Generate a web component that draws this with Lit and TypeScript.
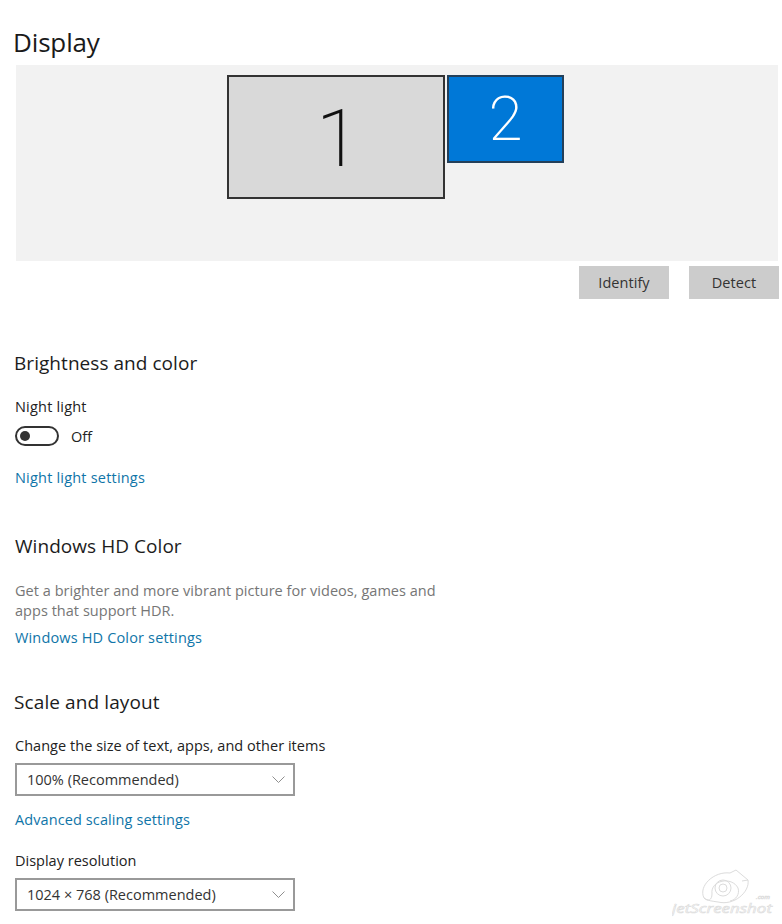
import { LitElement, html, css } from "lit";
import { customElement } from "lit/decorators.js";

const chevron = html`<svg class="chev" width="13" height="7" viewBox="0 0 13 7" fill="none" stroke="#8f8f8f" stroke-width="1"><path d="M0.5 0.5 L6.5 6.5 L12.5 0.5"/></svg>`;

@customElement("app-root")
export class AppRoot extends LitElement {
  static styles = css`
    :host {
      display: block;
      width: 782px;
      height: 924px;
      overflow: hidden;
      position: relative;
      background: #fff;
      font-family: "Open Sans", "Noto Sans", sans-serif;
      font-size: 14.5px;
      color: #222;
    }
    .page { display: flex; flex-direction: column; align-items: flex-start; padding-left: 15px; }
    h1 { font-size: 26px; font-weight: 400; line-height: 36px; margin: 24px 0 5px -2px; color: #1a1a1a; letter-spacing: -0.15px; }
    .preview {
      width: 762px; height: 196px; margin-left: 1px; background: #f2f2f2; box-sizing: border-box;
      display: flex; align-items: flex-start; gap: 2px; padding: 10px 0 0 211px;
    }
    .mon { box-sizing: border-box; display: flex; justify-content: center; align-items: center; border: 2px solid #333; }
    .mon1 { width: 218px; height: 124px; background: #d9d9d9; color: #111; font-size: 80px; padding: 4px 0 0 4px; }
    .mon2 { width: 117px; height: 88px; background: #0078d7; color: #fff; font-size: 62px; border-color: #24405a; }
    .digit { font-family: Roboto, "Open Sans", sans-serif; font-weight: 200; line-height: 1; }
    .buttons { display: flex; gap: 20px; margin: 5px 0 0 564px; letter-spacing: 0.05px; }
    .btn { width: 90px; height: 33px; background: #ccc; display: flex; align-items: center; justify-content: center; color: #333; }
    h2 { font-size: 19px; font-weight: 400; line-height: 26px; margin: 0; color: #1c1c1c; letter-spacing: 0.05px; }
    .h-bright { margin: 51px 0 0 -1px; }
    .label { line-height: 20px; }
    .l-night { margin-top: 21px; letter-spacing: 0.2px; }
    .toggle-row { display: flex; align-items: center; gap: 12px; margin-top: 9px; height: 20px; }
    .toggle { box-sizing: border-box; width: 44px; height: 20px; border: 2px solid #333; border-radius: 10px; display: flex; align-items: center; padding-left: 3px; }
    .knob { width: 10px; height: 10px; border-radius: 50%; background: #333; }
    .link { color: #0f75a8; line-height: 20px; letter-spacing: 0.2px; }
    .l-nset { margin-top: 22px; }
    .h-hd { margin-top: 45px; }
    .muted { color: #767676; line-height: 20px; margin-top: 22px; width: 440px; letter-spacing: 0.035px; }
    .l-hdset { margin-top: 7px; letter-spacing: 0.16px; }
    .h-scale { margin: 41px 0 0 -1px; letter-spacing: 0.1px; }
    .l-change { margin-top: 21px; letter-spacing: 0.037px; }
    .select {
      box-sizing: border-box; width: 280px; height: 33px; border: 2px solid #999; margin-top: 7px;
      display: flex; align-items: center; justify-content: space-between; padding: 0 8px 0 10px; color: #333;
    }
    .l-adv { margin-top: 14px; letter-spacing: 0.1px; }
    .l-res { margin-top: 21px; }
    .wm { position: absolute; left: 672px; top: 868px; width: 106px; height: 54px; }
    .wm text { font-family: "Open Sans", sans-serif; font-style: italic; fill: #fff; stroke: #dcdcdc; stroke-width: 0.6; }
  `;

  render() {
    return html`
      <div class="page">
        <h1>Display</h1>
        <div class="preview">
          <div class="mon mon1"><span class="digit">1</span></div>
          <div class="mon mon2"><span class="digit">2</span></div>
        </div>
        <div class="buttons"><div class="btn">Identify</div><div class="btn">Detect</div></div>

        <h2 class="h-bright">Brightness and color</h2>
        <div class="label l-night">Night light</div>
        <div class="toggle-row"><div class="toggle"><div class="knob"></div></div><span>Off</span></div>
        <div class="link l-nset">Night light settings</div>

        <h2 class="h-hd">Windows HD Color</h2>
        <div class="muted">Get a brighter and more vibrant picture for videos, games and apps that support HDR.</div>
        <div class="link l-hdset">Windows HD Color settings</div>

        <h2 class="h-scale">Scale and layout</h2>
        <div class="label l-change">Change the size of text, apps, and other items</div>
        <div class="select"><span>100% (Recommended)</span>${chevron}</div>
        <div class="link l-adv">Advanced scaling settings</div>
        <div class="label l-res">Display resolution</div>
        <div class="select"><span>1024 × 768 (Recommended)</span>${chevron}</div>
      </div>
      <svg class="wm" viewBox="0 0 106 54" fill="none" stroke="#dcdcdc" stroke-width="1">
        <path d="M32 30 C26 18 42 3 58 5 L64 2 L76 12 L70 13"/>
        <path d="M32 30 C36 34 40 32 40 26 C38 12 60 8 66 20 C68 26 64 32 58 33"/>
        <path d="M76 12 C78 24 62 38 46 34 C40 33 36 33 32 30"/>
        <circle cx="51" cy="20" r="8"/><circle cx="51" cy="20" r="4"/>
        <text x="0" y="45" font-size="13" textLength="100" lengthAdjust="spacingAndGlyphs">jetScreenshot</text>
        <text x="84" y="31" font-size="6" textLength="14" lengthAdjust="spacingAndGlyphs">.com</text>
      </svg>
    `;
  }
}
